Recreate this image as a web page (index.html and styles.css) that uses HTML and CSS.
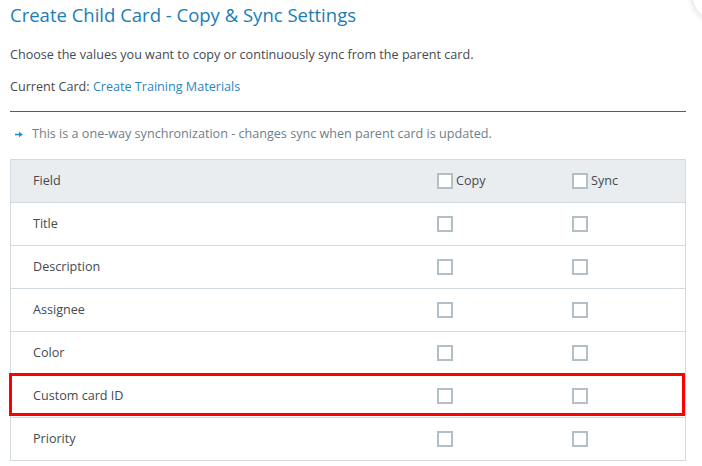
FILE: index.html
```html
<!DOCTYPE html>
<html>
<head>
<meta charset="utf-8">
<link rel="stylesheet" href="styles.css">
</head>
<body>
<div class="page">
  <h1 class="title">Create Child Card - Copy &amp; Sync Settings</h1>
  <p class="desc">Choose the values you want to copy or continuously sync from the parent card.</p>
  <p class="current">Current Card: <a class="link" href="#">Create Training Materials</a></p>
  <div class="rule"></div>
  <p class="info"><svg class="arrow" width="8" height="7" viewBox="0 0 8 7"><path d="M0 3.5H5" stroke="#2a8bd0" stroke-width="1.6"/><path d="M4 0.8L8 3.5L4 6.2Z" fill="#2a8bd0"/></svg>This is a one-way synchronization - changes sync when parent card is updated.</p>
  <div class="table">
    <div class="row head">
      <div class="cell field">Field</div>
      <div class="cell"><span class="box"></span><span class="lbl">Copy</span></div>
      <div class="cell"><span class="box"></span><span class="lbl">Sync</span></div>
    </div>
    <div class="row">
      <div class="cell field">Title</div>
      <div class="cell"><span class="box"></span></div>
      <div class="cell"><span class="box"></span></div>
    </div>
    <div class="row">
      <div class="cell field">Description</div>
      <div class="cell"><span class="box"></span></div>
      <div class="cell"><span class="box"></span></div>
    </div>
    <div class="row">
      <div class="cell field">Assignee</div>
      <div class="cell"><span class="box"></span></div>
      <div class="cell"><span class="box"></span></div>
    </div>
    <div class="row">
      <div class="cell field">Color</div>
      <div class="cell"><span class="box"></span></div>
      <div class="cell"><span class="box"></span></div>
    </div>
    <div class="row marked">
      <div class="cell field">Custom card ID</div>
      <div class="cell"><span class="box"></span></div>
      <div class="cell"><span class="box"></span></div>
      <div class="highlight"></div>
    </div>
    <div class="row">
      <div class="cell field">Priority</div>
      <div class="cell"><span class="box"></span></div>
      <div class="cell"><span class="box"></span></div>
    </div>
  </div>
</div>
</body>
</html>
```

FILE: styles.css
```css
html, body {
  margin: 0;
  padding: 0;
  overflow: hidden;
}
body {
  font-family: "Open Sans", "Liberation Sans", sans-serif;
  color: #444a4f;
  width: 702px;
  height: 466px;
  background: radial-gradient(circle at 720px -6px, #ffffff 27px, rgba(0, 0, 0, 0.07) 28px, rgba(255, 255, 255, 0) 34px), #ffffff;
}
.page {
  padding-left: 10px;
  width: 676px;
}
.title {
  margin: 3px 0 0;
  font-size: 18.5px;
  line-height: 24px;
  font-weight: 400;
  color: #1b7db6;
}
.desc {
  margin: 19px 0 0;
  font-size: 12.6px;
  line-height: 18px;
}
.current {
  margin: 14px 0 0;
  font-size: 12.6px;
  line-height: 18px;
}
.link {
  color: #2a86c2;
  text-decoration: none;
}
.rule {
  margin-top: 15px;
  height: 1px;
  background: #1f6f99;
}
.info {
  margin: 13px 0 0;
  font-size: 12.6px;
  line-height: 18px;
  color: #6c808c;
  display: flex;
  align-items: center;
  padding-left: 5px;
}
.arrow {
  margin-right: 9px;
  flex: none;
}
.table {
  margin-top: 16px;
  border: 1px solid #d3dadf;
  border-bottom: none;
}
.row {
  display: grid;
  grid-template-columns: 426px 135px 1fr;
  height: 42px;
  border-bottom: 1px solid #d3dadf;
  font-size: 12.6px;
  position: relative;
}
.head {
  background: #e9edf0;
}
.cell {
  display: flex;
  align-items: center;
  padding-bottom: 1px;
}
.field {
  padding-left: 22px;
}
.box {
  width: 16px;
  height: 16px;
  box-sizing: border-box;
  border: 2px solid #b2bfc6;
  background: #fff;
  flex: none;
}
.lbl {
  margin-left: 3px;
}
.highlight {
  position: absolute;
  left: -2px;
  top: -2px;
  width: 676px;
  height: 43px;
  box-sizing: border-box;
  border: 3px solid #ff0000;
}
```
